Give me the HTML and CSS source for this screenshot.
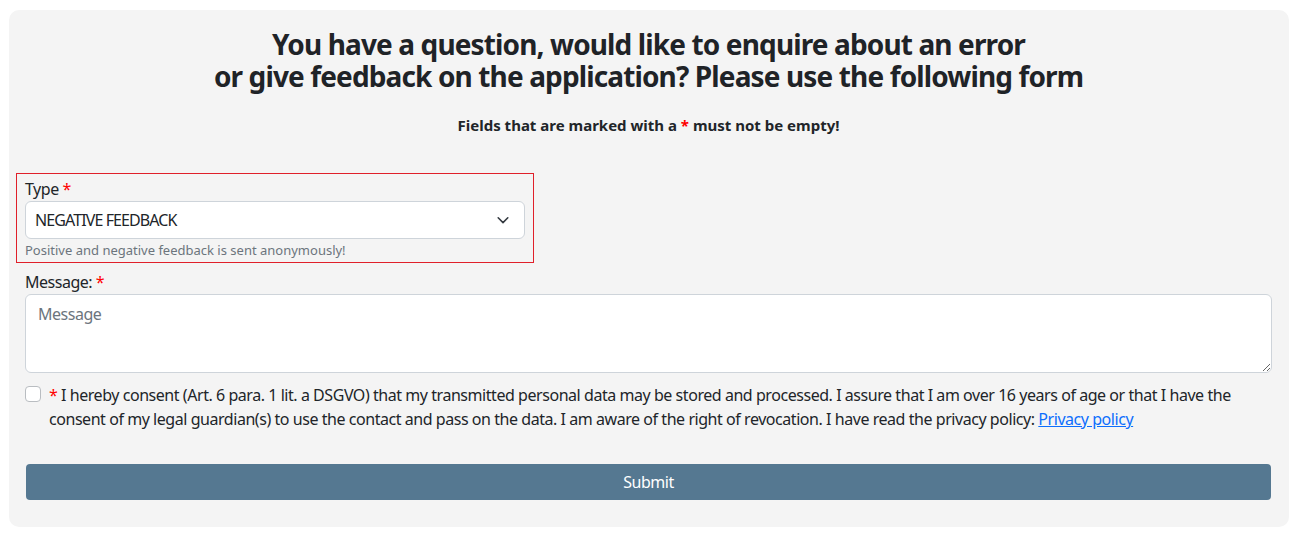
FILE: index.html
```html
<!DOCTYPE html>
<html lang="en">
<head>
<meta charset="utf-8">
<title>Feedback</title>
<link rel="stylesheet" href="styles.css">
</head>
<body>
<main class="card">
  <h1 class="title">You have a question, would like to enquire about an error<br>or give feedback on the application? Please use the following form</h1>
  <p class="notice">Fields that are marked with a <span class="req">*</span> must not be empty!</p>
  <form class="form">
    <div class="group highlighted">
      <label class="label" for="type">Type <span class="req">*</span></label>
      <div class="select">
        <span class="select-value">NEGATIVE FEEDBACK</span>
        <svg class="chevron" width="14" height="14" viewBox="0 0 16 16"><path d="M2.5 5.5l5.5 5.5 5.5-5.5" fill="none" stroke="#343a40" stroke-width="1.8" stroke-linecap="round" stroke-linejoin="round"/></svg>
      </div>
      <div class="help">Positive and negative feedback is sent anonymously!</div>
    </div>
    <div class="group">
      <label class="label" for="msg">Message: <span class="req">*</span></label>
      <textarea id="msg" class="textarea" placeholder="Message"></textarea>
    </div>
    <div class="consent">
      <span class="checkbox"></span>
      <p class="consent-text"><span class="req">*</span> I hereby consent (Art. 6 para. 1 lit. a DSGVO) that my transmitted personal data may be stored and processed. I assure that I am over 16 years of age or that I have the consent of my legal guardian(s) to use the contact and pass on the data. I am aware of the right of revocation. I have read the privacy policy: <a href="#" class="link">Privacy policy</a></p>
    </div>
    <button type="button" class="submit">Submit</button>
  </form>
</main>
</body>
</html>
```

FILE: styles.css
```css
* { box-sizing: border-box; }
html, body { margin: 0; padding: 0; background: #ffffff; }
body {
  font-family: "Noto Sans", "Open Sans", sans-serif;
  font-size: 16px;
  letter-spacing: -0.03em;
  color: #212529;
  padding: 10px 10px 19px 9px;
}
.card {
  background: #f4f4f4;
  border-radius: 10px;
  padding: 18px 17px 28px 16px;
  height: 517px;
}
.title {
  margin: 0;
  text-align: center;
  font-size: 28px;
  line-height: 32px;
  font-weight: 700;
  letter-spacing: -0.87px;
  color: #1f2327;
}
.notice {
  margin: 23px 0 0;
  text-align: center;
  font-size: 15px;
  line-height: 20px;
  font-weight: 700;
  letter-spacing: 0;
}
.req { color: #ff0000; }
.form { margin-top: 38px; }
.highlighted {
  width: 518px;
  margin-left: -9px;
  padding: 3px 8px 2px 8px;
  border: 1px solid #e0202a;
}
.label {
  display: block;
  font-size: 16px;
  line-height: 24px;
  margin-bottom: 0;
}
.select {
  display: flex;
  align-items: center;
  justify-content: space-between;
  height: 38px;
  background: #fff;
  border: 1px solid #ced4da;
  border-radius: 6px;
  padding: 0 14px 0 9px;
  font-size: 16px;
}
.select-value { letter-spacing: -0.9px; }
.chevron { display: block; }
.help {
  margin-top: 1px;
  font-size: 13px;
  line-height: 20px;
  letter-spacing: 0;
  color: #6c757d;
}
.group + .group { margin-top: 7px; }
.textarea {
  display: block;
  width: 100%;
  height: 79px;
  background: #fff;
  border: 1px solid #ced4da;
  border-radius: 6px;
  padding: 8px 12px;
  font-family: inherit;
  letter-spacing: inherit;
  font-size: 16px;
  color: #212529;
  resize: vertical;
}
.textarea::placeholder { color: #6c757d; }
.consent {
  display: flex;
  gap: 8px;
  margin-top: 10px;
  align-items: flex-start;
}
.checkbox {
  flex: none;
  width: 16px;
  height: 16px;
  margin-top: 3px;
  background: #fff;
  border: 1px solid #b9bdc1;
  border-radius: 4px;
}
.consent-text {
  margin: 0;
  line-height: 24px;
  font-size: 16px;
  letter-spacing: -0.45px;
}
.link { color: #0d6efd; text-decoration: underline; }
.submit {
  display: block;
  height: 36px;
  margin-top: 33px;
  margin-left: 1px;
  width: calc(100% - 2px);
  background: #557891;
  color: #ffffff;
  border: none;
  border-radius: 4px;
  font-family: inherit;
  letter-spacing: inherit;
  font-size: 16px;
}
```
